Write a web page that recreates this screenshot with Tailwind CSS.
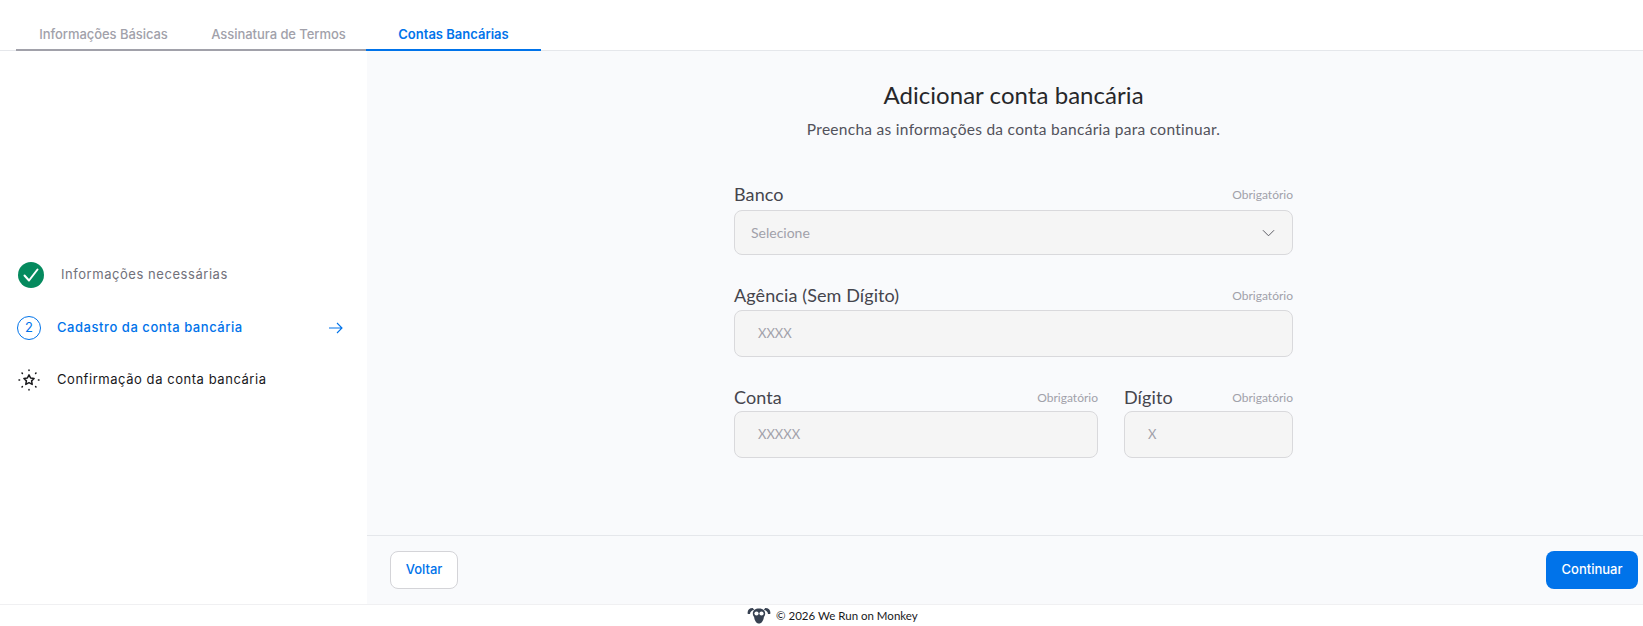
<!DOCTYPE html>
<html lang="pt-BR">
<head>
  <meta charset="UTF-8" />
  <title>Contas Bancárias</title>
  <script src="https://cdn.jsdelivr.net/npm/@tailwindcss/browser@4"></script>
</head>
<body class="bg-white font-['Inter',sans-serif]">
  <div class="h-[626px] flex flex-col overflow-hidden">

    <!-- Tabs -->
    <div class="h-[51px] shrink-0 border-b border-[#e5e7eb] pl-[16px] flex items-end text-[13px] font-medium">
      <div class="w-[175px] h-[51px] -mb-px pb-[5px] flex items-end justify-center border-b-2 border-[#a1a1aa] text-[#a1a1aa] tracking-[-0.05px]">Informações Básicas</div>
      <div class="w-[175px] h-[51px] -mb-px pb-[5px] flex items-end justify-center border-b-2 border-[#a1a1aa] text-[#a1a1aa] tracking-[-0.05px]">Assinatura de Termos</div>
      <div class="w-[175px] h-[51px] -mb-px pb-[5px] flex items-end justify-center border-b-2 border-[#0073ea] text-[#0073ea] font-semibold">Contas Bancárias</div>
    </div>

    <div class="flex flex-1 min-h-0">
      <!-- Steps -->
      <aside class="w-[367px] shrink-0 flex flex-col justify-center gap-[26px] text-[13px] tracking-[0.55px]">
        <div class="flex items-center h-[26px] pl-[18px] mb-[1px]">
          <svg class="w-[26px] h-[26px]" viewBox="0 0 26 26"><circle cx="13" cy="13" r="13" fill="#058a5e"/><path d="M6.500 13.500l4.500 5 8.500-11" fill="none" stroke="#fff" stroke-width="2" stroke-linecap="round" stroke-linejoin="round"/></svg>
          <span class="ml-[17px] text-[#71717a]">Informações necessárias</span>
        </div>
        <div class="flex items-center h-[26px] pl-[17px] pr-[24px] text-[#0073ea] font-medium">
          <span class="w-[24px] h-[24px] rounded-full border border-[#0073ea] flex items-center justify-center text-[13px] font-normal tracking-normal">2</span>
          <span class="ml-[16px] flex-1">Cadastro da conta bancária</span>
          <svg class="w-[14px] h-[12px]" viewBox="0 0 14 12" fill="none" stroke="#0073ea" stroke-width="1.100"><path d="M0 6h13M8 1l5 5-5 5"/></svg>
        </div>
        <div class="flex items-center h-[26px] pl-[18px] text-[#18181b]">
          <svg class="w-[22px] h-[22px]" viewBox="0 0 22 22" fill="none" stroke="#18181b">
            <path d="M11 5.800l1.600 3.200 3.500.5-2.500 2.400.6 3.500-3.200-1.700-3.200 1.700.6-3.500-2.500-2.400 3.500-.5z" stroke-width="1.500" stroke-linejoin="round"/>
            <path d="M11 1v.6M11 20.400v.6M1 11h.6M20.400 11h.6M4 4l.4.4M17.600 17.600l.4.4M18 4l-.4.4M4.400 17.600L4 18" stroke-width="1.500" stroke-linecap="round"/>
          </svg>
          <span class="ml-[17px]">Confirmação da conta bancária</span>
        </div>
      </aside>

      <!-- Form -->
      <main class="flex-1 min-w-0 bg-[#f9fafc] flex flex-col">
        <div class="flex-1 pl-[17px] pt-[27px] flex flex-col items-center">
          <h1 class="text-[24px] leading-[34px] text-[#27272a] font-['Lato',sans-serif] tracking-[0.05px]">Adicionar conta bancária</h1>
          <p class="mt-[6px] text-[15.500px] leading-[22px] text-[#52525b] font-['Lato',sans-serif] tracking-[0.28px]">Preencha as informações da conta bancária para continuar.</p>

          <div class="w-[559px] mt-[42px] font-['Lato',sans-serif]">
            <div class="flex items-end justify-between h-[24px] mb-[4px]">
              <label class="text-[18px] leading-[24px] text-[#45454d] tracking-[0.1px]">Banco</label>
              <span class="text-[12px] text-[#a1a1aa] pb-[2px]">Obrigatório</span>
            </div>
            <div class="h-[45px] rounded-[8px] border border-[#d9d9dc] bg-[#f5f5f5] pl-[16px] pr-[17px] flex items-center justify-between text-[14px] text-[#a1a1aa]">
              <span class="-mt-px">Selecione</span>
              <svg class="w-[13px] h-[8px]" viewBox="0 0 14 8" fill="none" stroke="#52525b" stroke-width="1"><path d="M1 1l6 6 6-6"/></svg>
            </div>

            <div class="flex items-end justify-between h-[24px] mt-[28px] mb-[3px]">
              <label class="text-[18px] leading-[24px] text-[#45454d] tracking-[0.1px]">Agência (Sem Dígito)</label>
              <span class="text-[12px] text-[#a1a1aa] pb-[2px]">Obrigatório</span>
            </div>
            <div class="h-[47px] rounded-[8px] border border-[#d9d9dc] bg-[#f5f5f5] pl-[23px] flex items-center text-[13px] text-[#a1a1aa]">XXXX</div>

            <div class="flex gap-[26px] mt-[28px]">
              <div class="w-[364px]">
                <div class="flex items-end justify-between h-[24px] mb-[2px]">
                  <label class="text-[18px] leading-[24px] text-[#45454d] tracking-[0.1px]">Conta</label>
                  <span class="text-[12px] text-[#a1a1aa] pb-[2px]">Obrigatório</span>
                </div>
                <div class="h-[47px] rounded-[8px] border border-[#d9d9dc] bg-[#f5f5f5] pl-[23px] flex items-center text-[13px] text-[#a1a1aa]">XXXXX</div>
              </div>
              <div class="flex-1">
                <div class="flex items-end justify-between h-[24px] mb-[2px]">
                  <label class="text-[18px] leading-[24px] text-[#45454d] tracking-[0.1px]">Dígito</label>
                  <span class="text-[12px] text-[#a1a1aa] pb-[2px]">Obrigatório</span>
                </div>
                <div class="h-[47px] rounded-[8px] border border-[#d9d9dc] bg-[#f5f5f5] pl-[23px] flex items-center text-[13px] text-[#a1a1aa]">X</div>
              </div>
            </div>
          </div>
        </div>

        <div class="h-[69px] shrink-0 border-t border-[#e5e7eb] pl-[23px] pr-[5px] flex items-center justify-between text-[13px] font-medium">
          <button class="w-[68px] h-[38px] rounded-[8px] border border-[#d4d4d8] bg-white text-[#0073ea]">Voltar</button>
          <button class="w-[92px] h-[38px] rounded-[8px] bg-[#0073ea] text-white">Continuar</button>
        </div>
      </main>
    </div>

    <!-- Footer -->
    <footer class="h-[22px] shrink-0 border-t border-[#f0f0f2] pl-[747px] flex items-center text-[11.500px] text-[#18181b] font-['Lato',sans-serif]">
      <svg class="w-[24px] h-[17px]" viewBox="0 0 24 17" fill="#374151">
        <path d="M.8 7C0 3.500 1.800 1 5.800 1L7.200 3C5 3.200 3.200 4.500 3 7zM23.200 7c.8-3.500-1-6-5-6L16.800 3c2.200.2 4 1.500 4.200 4z"/>
        <path d="M12 1.500c3.700 0 6.200 2 6.200 4.900 0 1.600-.6 2.600-1.300 3.500-.4 3.400-2.200 6.600-4.900 6.600s-4.500-3.200-4.900-6.600C6.400 9 5.800 8 5.800 6.400 5.800 3.500 8.300 1.500 12 1.500z"/>
        <circle cx="9.500" cy="6.500" r="2.100" fill="#fff"/><circle cx="14.500" cy="6.500" r="2.100" fill="#fff"/>
      </svg>
      <span class="ml-[5px]">© 2026 We Run on Monkey</span>
    </footer>
  </div>
</body>
</html>
